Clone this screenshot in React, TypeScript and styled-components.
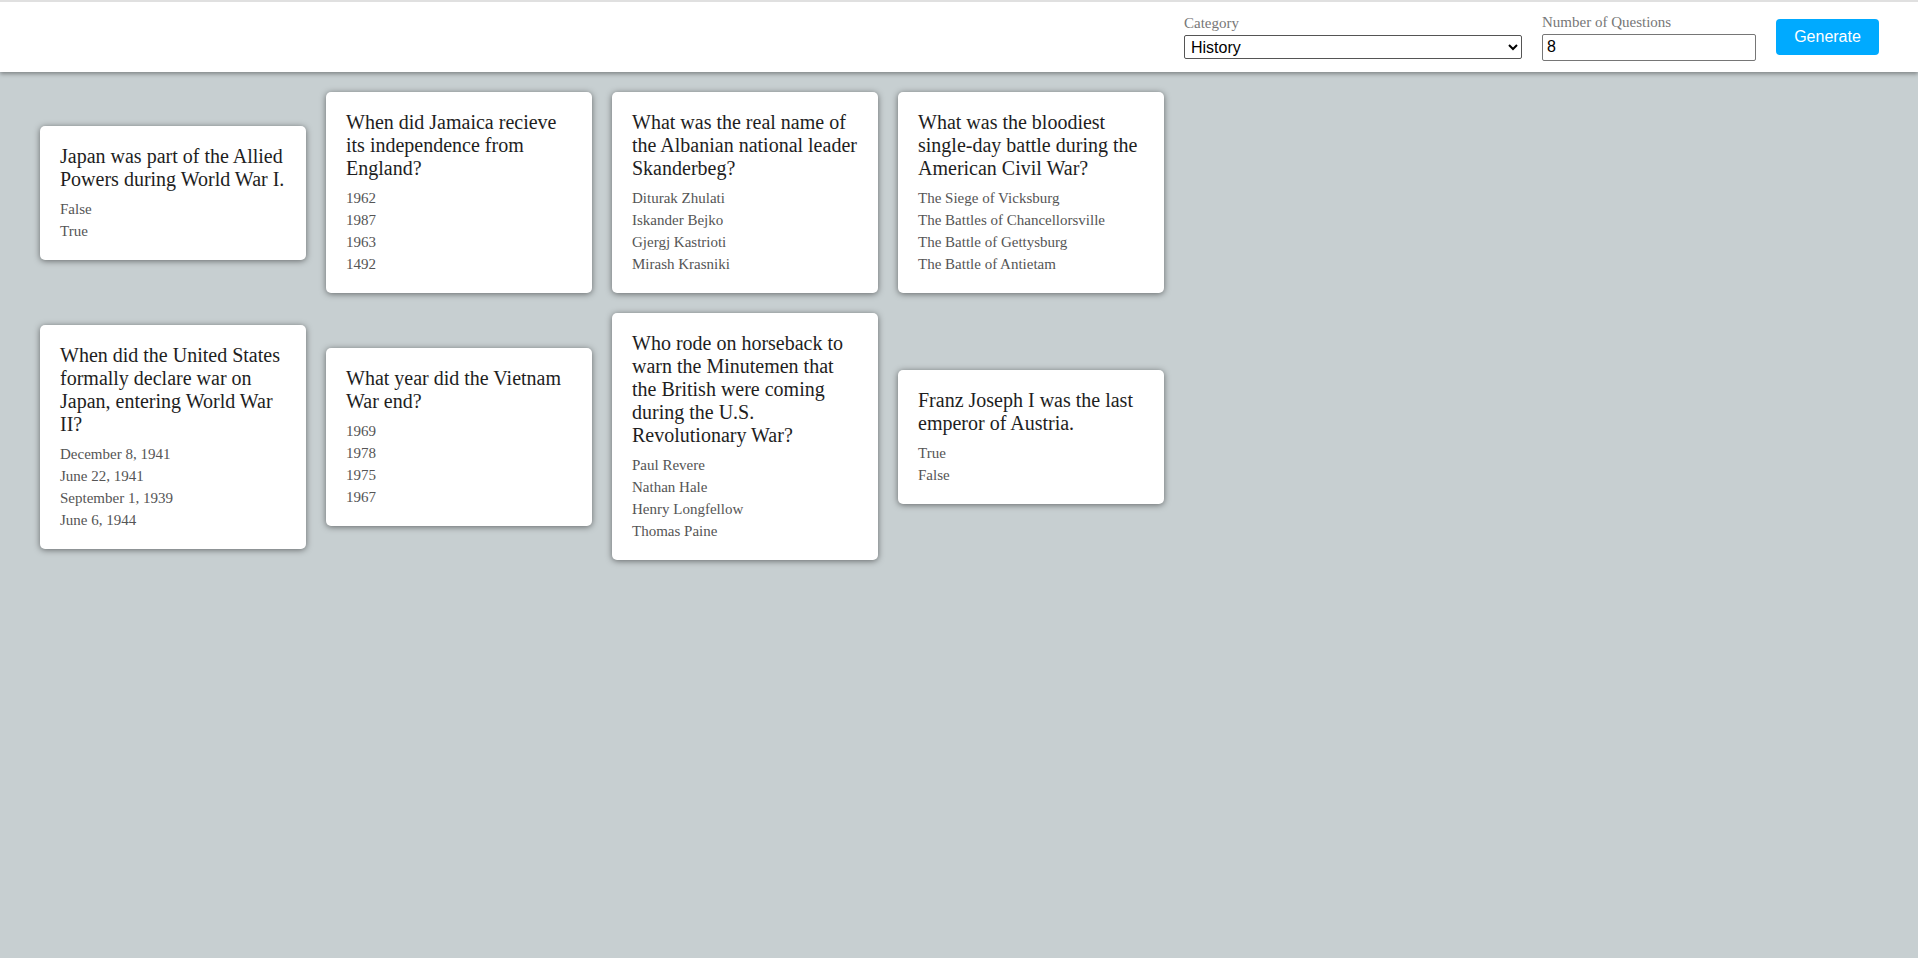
import React from "react"
import styled, { createGlobalStyle } from "styled-components"

const GlobalStyle = createGlobalStyle`
    html, body {
        margin: 0;
        padding: 0;
        background-color: #c7cfd1;
        font-family: "Liberation Serif", "Times New Roman", serif;
    }
`

const Page = styled.div`
    min-height: 958px;
    background-color: #c7cfd1;
`

const Header = styled.header`
    height: 70px;
    border-top: 2px solid #e0e0e0;
    background-color: #ffffff;
    box-shadow: 0 2px 4px rgba(0, 0, 0, 0.35);
    display: flex;
    justify-content: flex-end;
    align-items: center;
    gap: 20px;
    padding-right: 39px;
    position: relative;
    z-index: 1;
`

const Field = styled.label`
    display: flex;
    flex-direction: column;
`

const FieldLabel = styled.span`
    font-size: 15px;
    line-height: 17px;
    color: #777777;
    margin-bottom: 3px;
`

const Select = styled.select`
    width: 338px;
    height: 24px;
    font-family: "Liberation Sans", Arial, sans-serif;
    font-size: 16px;
    color: #000000;
    border: 1px solid #555555;
    border-radius: 2px;
    background-color: #ffffff;
    padding: 0 2px;
`

const NumberInput = styled.input`
    box-sizing: border-box;
    width: 214px;
    height: 27px;
    font-family: "Liberation Sans", Arial, sans-serif;
    font-size: 16px;
    color: #000000;
    border: 1px solid #767676;
    border-radius: 2px;
    padding: 0 4px;
`

const GenerateButton = styled.button`
    width: 103px;
    height: 36px;
    border: none;
    border-radius: 4px;
    background-color: #00aaff;
    color: #ffffff;
    font-family: "Liberation Sans", Arial, sans-serif;
    font-size: 16px;
    cursor: pointer;
`

const CardGrid = styled.main`
    display: grid;
    grid-template-columns: repeat(4, 266px);
    column-gap: 20px;
    row-gap: 20px;
    align-items: center;
    padding: 20px 0 0 40px;
`

const Card = styled.div`
    background-color: #ffffff;
    border-radius: 5px;
    box-shadow: 0 1px 6px rgba(0, 0, 0, 0.5);
    padding: 19px 20px 18px;
`

const Question = styled.div`
    font-size: 20px;
    line-height: 23px;
    color: #1e1e1e;
    margin-bottom: 7px;
`

const AnswerList = styled.ul`
    list-style: none;
    margin: 0;
    padding: 0;
`

const Answer = styled.li`
    font-size: 15px;
    line-height: 22px;
    color: #555555;
`

interface QuizQuestion {
    question: string
    answers: string[]
}

const questions: QuizQuestion[] = [
    {
        question: "Japan was part of the Allied Powers during World War I.",
        answers: ["False", "True"],
    },
    {
        question: "When did Jamaica recieve its independence from England?",
        answers: ["1962", "1987", "1963", "1492"],
    },
    {
        question:
            "What was the real name of the Albanian national leader Skanderbeg?",
        answers: [
            "Diturak Zhulati",
            "Iskander Bejko",
            "Gjergj Kastrioti",
            "Mirash Krasniki",
        ],
    },
    {
        question:
            "What was the bloodiest single-day battle during the American Civil War?",
        answers: [
            "The Siege of Vicksburg",
            "The Battles of Chancellorsville",
            "The Battle of Gettysburg",
            "The Battle of Antietam",
        ],
    },
    {
        question:
            "When did the United States formally declare war on Japan, entering World War II?",
        answers: [
            "December 8, 1941",
            "June 22, 1941",
            "September 1, 1939",
            "June 6, 1944",
        ],
    },
    {
        question: "What year did the Vietnam War end?",
        answers: ["1969", "1978", "1975", "1967"],
    },
    {
        question:
            "Who rode on horseback to warn the Minutemen that the British were coming during the U.S. Revolutionary War?",
        answers: ["Paul Revere", "Nathan Hale", "Henry Longfellow", "Thomas Paine"],
    },
    {
        question: "Franz Joseph I was the last emperor of Austria.",
        answers: ["True", "False"],
    },
]

function QuestionCard({ item }: { item: QuizQuestion }) {
    return (
        <Card>
            <Question>{item.question}</Question>
            <AnswerList>
                {item.answers.map((answer) => (
                    <Answer key={answer}>{answer}</Answer>
                ))}
            </AnswerList>
        </Card>
    )
}

export default function App() {
    return (
        <Page>
            <GlobalStyle />
            <Header>
                <Field>
                    <FieldLabel>Category</FieldLabel>
                    <Select defaultValue="history">
                        <option value="general">General Knowledge</option>
                        <option value="history">History</option>
                        <option value="science">Science &amp; Nature</option>
                    </Select>
                </Field>
                <Field>
                    <FieldLabel>Number of Questions</FieldLabel>
                    <NumberInput type="number" defaultValue={8} />
                </Field>
                <GenerateButton>Generate</GenerateButton>
            </Header>
            <CardGrid>
                {questions.map((item) => (
                    <QuestionCard key={item.question} item={item} />
                ))}
            </CardGrid>
        </Page>
    )
}
